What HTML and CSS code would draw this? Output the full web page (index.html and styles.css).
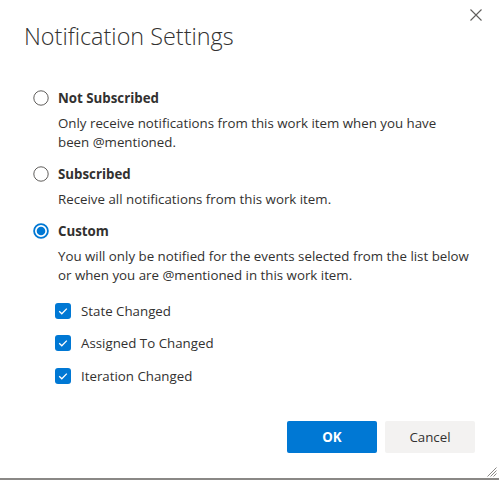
FILE: index.html
```html
<!DOCTYPE html>
<html lang="en">
<head>
<meta charset="utf-8">
<title>Notification Settings</title>
<link rel="stylesheet" href="styles.css">
</head>
<body>
<div class="dialog">
  <div class="header">
    <h1 class="title">Notification Settings</h1>
    <button class="close" aria-label="Close">
      <svg width="12" height="12" viewBox="0 0 12 12"><path d="M0.5 0.5 L11.5 11.5 M11.5 0.5 L0.5 11.5" stroke="#605e5c" stroke-width="1.1" fill="none"/></svg>
    </button>
  </div>
  <div class="options">
    <div class="option">
      <div class="option-row">
        <svg class="radio" width="16" height="16" viewBox="0 0 16 16"><circle cx="8" cy="8" r="7.2" stroke="#605e5c" stroke-width="1" fill="#fff"/></svg>
        <span class="option-label">Not Subscribed</span>
      </div>
      <p class="option-desc">Only receive notifications from this work item when you have<br>been @mentioned.</p>
    </div>
    <div class="option">
      <div class="option-row">
        <svg class="radio" width="16" height="16" viewBox="0 0 16 16"><circle cx="8" cy="8" r="7.2" stroke="#605e5c" stroke-width="1" fill="#fff"/></svg>
        <span class="option-label">Subscribed</span>
      </div>
      <p class="option-desc">Receive all notifications from this work item.</p>
    </div>
    <div class="option">
      <div class="option-row">
        <svg class="radio" width="16" height="16" viewBox="0 0 16 16"><circle cx="8" cy="8" r="6.9" stroke="#0078d4" stroke-width="1.8" fill="#fff"/><circle cx="8" cy="8" r="4.3" fill="#0078d4"/></svg>
        <span class="option-label">Custom</span>
      </div>
      <p class="option-desc">You will only be notified for the events selected from the list below<br>or when you are @mentioned in this work item.</p>
      <div class="checks">
        <div class="check-row">
          <span class="checkbox"><svg width="16" height="16" viewBox="0 0 16 16"><path d="M4.2 8.3 L6.8 10.8 L11.8 5.6" stroke="#fff" stroke-width="1.3" fill="none"/></svg></span>
          <span class="check-label">State Changed</span>
        </div>
        <div class="check-row">
          <span class="checkbox"><svg width="16" height="16" viewBox="0 0 16 16"><path d="M4.2 8.3 L6.8 10.8 L11.8 5.6" stroke="#fff" stroke-width="1.3" fill="none"/></svg></span>
          <span class="check-label">Assigned To Changed</span>
        </div>
        <div class="check-row">
          <span class="checkbox"><svg width="16" height="16" viewBox="0 0 16 16"><path d="M4.2 8.3 L6.8 10.8 L11.8 5.6" stroke="#fff" stroke-width="1.3" fill="none"/></svg></span>
          <span class="check-label">Iteration Changed</span>
        </div>
      </div>
    </div>
  </div>
  <div class="footer">
    <button class="btn btn-primary">OK</button>
    <button class="btn btn-default">Cancel</button>
  </div>
  <svg class="resize" width="10" height="10" viewBox="0 0 10 10"><path d="M9.5 0.5 L0.5 9.5 M9.5 3.5 L3.5 9.5 M9.5 6.5 L6.5 9.5" stroke="#8a8886" stroke-width="1" fill="none"/></svg>
</div>
<div class="backdrop-line"></div>
</body>
</html>
```
FILE: styles.css
```css
html, body {
  margin: 0;
  padding: 0;
  background: #fff;
}
body {
  width: 499px;
  height: 480px;
  overflow: hidden;
  font-family: "Open Sans", "Noto Sans", sans-serif;
  color: #323130;
}
.dialog {
  position: relative;
  height: 478px;
  box-sizing: border-box;
}
.header {
  display: flex;
  justify-content: space-between;
  align-items: flex-start;
  padding: 0 17px 0 24px;
}
.title {
  margin: 20px 0 0 0;
  font-size: 23.4px;
  line-height: 32px;
  font-weight: 300;
  color: #323130;
}
.close {
  margin-top: 9px;
  padding: 0;
  border: 0;
  background: transparent;
  width: 12px;
  height: 12px;
  display: flex;
}
.options {
  display: flex;
  flex-direction: column;
  gap: 12px;
  padding: 36px 20px 0 33px;
}
.option-row {
  display: flex;
  align-items: center;
  gap: 9px;
  height: 20px;
}
.radio {
  flex: none;
}
.option-label {
  font-size: 13.3px;
  font-weight: 700;
  line-height: 20px;
}
.option-desc {
  margin: 6px 0 0 25px;
  font-size: 13.3px;
  line-height: 19px;
}
.checks {
  display: flex;
  flex-direction: column;
  gap: 12.5px;
  margin: 15.5px 0 0 22px;
}
.check-row {
  display: flex;
  align-items: center;
  gap: 10px;
  height: 20px;
}
.checkbox {
  width: 16px;
  height: 16px;
  border-radius: 3px;
  background: #0078d4;
  display: flex;
  flex: none;
}
.check-label {
  font-size: 13.3px;
  line-height: 20px;
}
.footer {
  display: flex;
  justify-content: flex-end;
  gap: 8px;
  padding: 35px 24px 0 0;
}
.btn {
  width: 90px;
  height: 32px;
  border: 0;
  border-radius: 2px;
  font-family: "Open Sans", "Noto Sans", sans-serif;
  font-size: 13.3px;
}
.btn-primary {
  background: #0078d4;
  color: #fff;
  font-weight: 700;
}
.btn-default {
  background: #f3f2f1;
  color: #323130;
  font-weight: 400;
}
.resize {
  position: absolute;
  right: 2px;
  bottom: 1px;
}
.backdrop-line {
  height: 2px;
  background: #8a8886;
}
```
